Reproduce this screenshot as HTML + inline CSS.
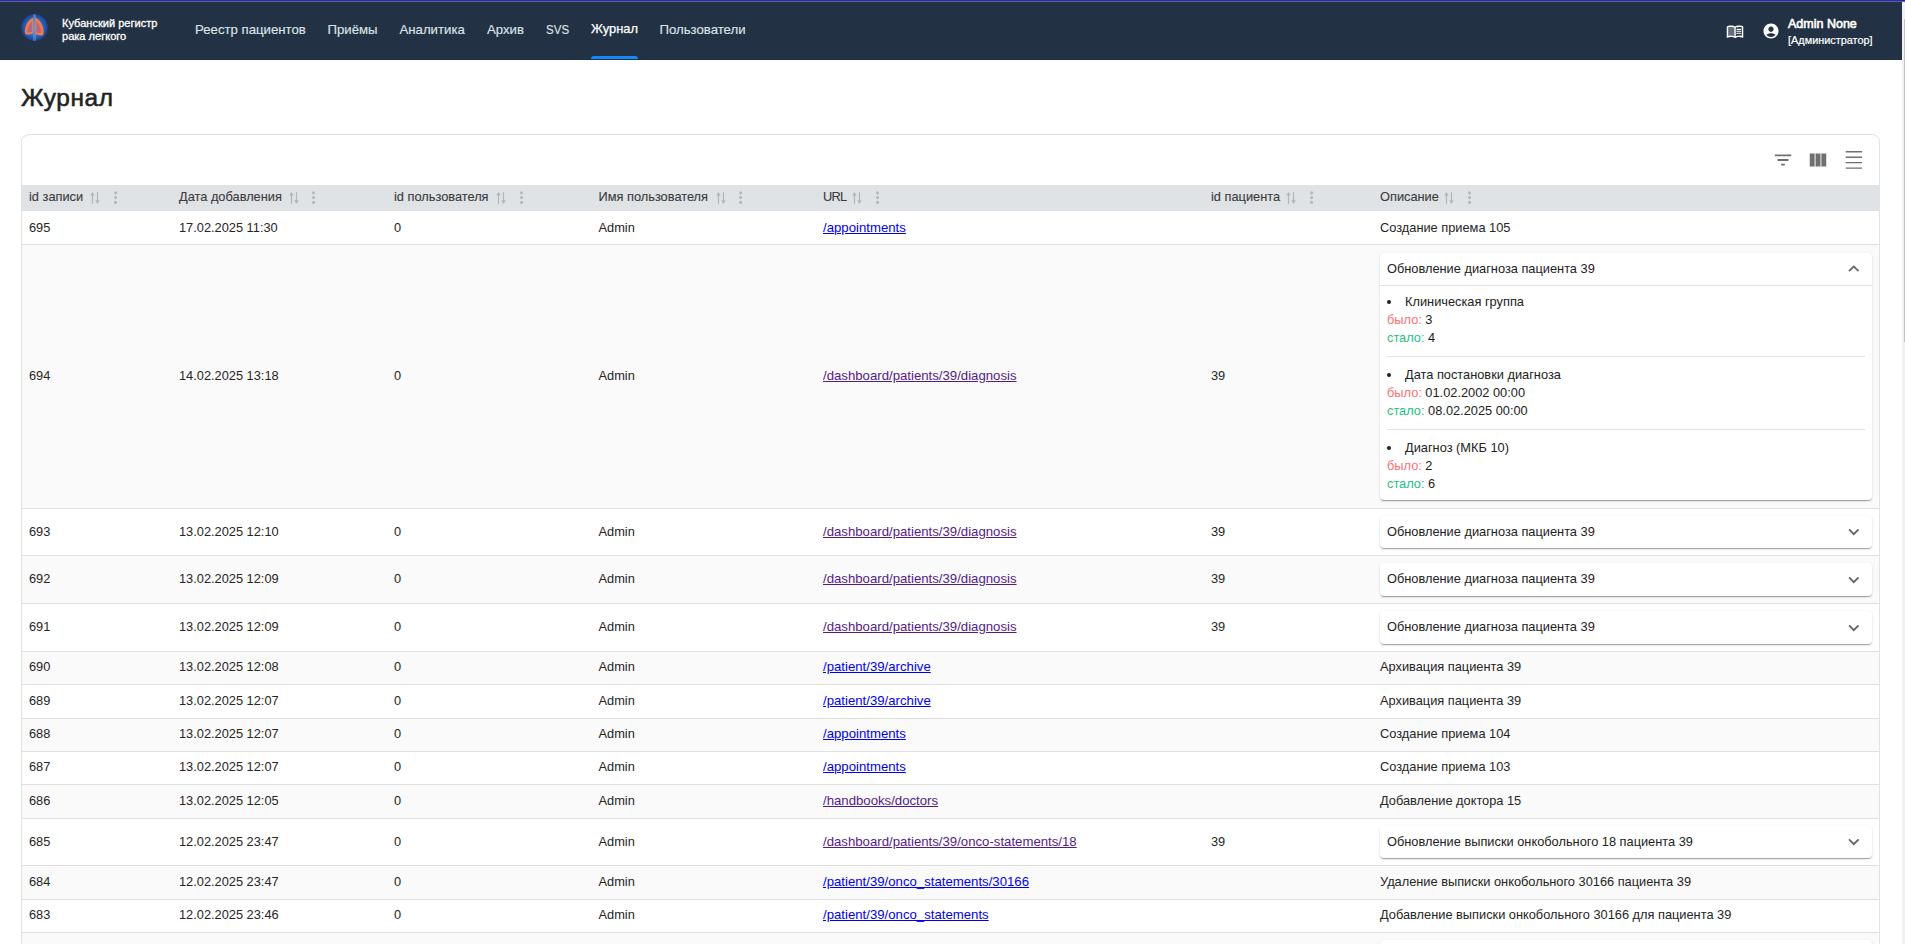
<!DOCTYPE html>
<html lang="ru"><head><meta charset="utf-8"><title>Журнал</title>
<style>
*{box-sizing:border-box}
html,body{margin:0;padding:0}
body{width:1905px;height:944px;overflow:hidden;position:relative;background:#fff;font-family:"Liberation Sans",sans-serif;color:#212121}
.abs{position:absolute}
#tl0{position:absolute;left:0;top:0;width:1905px;height:1px;background:#2b2c94}
#tl1{position:absolute;left:0;top:1px;width:1905px;height:1px;background:#5f5eae}
#hdr{position:absolute;left:0;top:2px;width:1902px;height:57.5px;background:#223244}
.nav{position:absolute;top:22.8px;font-size:13.2px;color:#dde2e7;white-space:nowrap;line-height:1;-webkit-text-stroke:0.15px #dde2e7}
.nav.act{color:#fff;-webkit-text-stroke:0.25px #fff}
#ind{position:absolute;left:591px;top:56px;width:47px;height:3px;background:#1688f3;border-radius:3px 3px 0 0}
#sb{position:absolute;left:1902px;top:2px;width:3px;height:942px;background:#f1f1f1}
#sbt{position:absolute;left:1904px;top:19px;width:1px;height:323px;background:#c1c1c1}
h1{position:absolute;left:21px;top:81.5px;margin:0;font-size:24.4px;letter-spacing:0.6px;font-weight:normal;line-height:32px;color:#222;-webkit-text-stroke:0.55px #222;white-space:nowrap}
#card{position:absolute;left:21px;top:134px;width:1859px;height:830px;border:1px solid #dfe3e6;border-radius:8px;overflow:hidden;background:#fff}
.brand{font-size:11.05px;line-height:13px;color:#fff;white-space:nowrap;-webkit-text-stroke:0.3px #fff}
.uname{font-size:12.5px;line-height:1;color:#fff;white-space:nowrap;-webkit-text-stroke:0.6px #fff}
.urole{font-size:10.9px;line-height:12px;color:#fff;white-space:nowrap;-webkit-text-stroke:0.2px #fff}
</style><style>
#card{position:absolute;left:21px;top:134px;width:1859px;height:830px;border:1px solid #dfe3e6;border-radius:8px;background:#fff}
.hrow{position:absolute;left:22px;top:185px;width:1857px;height:26px;background:#dfe3e6}
.ht{position:absolute;top:183.6px;height:26px;line-height:26px;font-size:12.8px;color:#3c3c3c;white-space:nowrap;-webkit-text-stroke:0.12px #3c3c3c}
.row{position:absolute;left:22px;width:1857px;border-bottom:1px solid #e0e0e0}
.row.g{background:#fafafa}
.c{position:absolute;font-size:12.8px;color:#252525;white-space:nowrap;line-height:16px}
a.l{color:#0000ee;text-decoration:underline;font-size:13.2px}
a.v{color:#551a8b;text-decoration:underline;font-size:13.2px}
.acc{position:absolute;left:1380px;width:492px;background:#fff;border-radius:4px;box-shadow:0px 2px 1px -1px rgba(0,0,0,0.2),0px 1px 1px 0px rgba(0,0,0,0.14),0px 1px 3px 0px rgba(0,0,0,0.12)}
.at{position:absolute;left:7px;font-size:12.8px;color:#222;white-space:nowrap;line-height:16px}
.chev{position:absolute;left:1843px}
.det{position:absolute;font-size:12.8px;line-height:16px;white-space:nowrap;color:#222}
.was{color:#f77373}
.now{color:#27bf80}
.bul{position:absolute;width:4.2px;height:4.2px;border-radius:50%;background:#222}
.dv{position:absolute;left:1387px;width:478px;height:1px;background:#dfe3e6}
</style>
</head>
<body>
<div id="tl0"></div><div id="tl1"></div>
<div id="hdr"></div>
<svg class="abs" style="left:20px;top:13px" width="29" height="29" viewBox="0 0 29 29">
<defs><radialGradient id="lg" cx="50%" cy="50%" r="50%"><stop offset="0" stop-color="#4f86d6"/><stop offset="0.6" stop-color="#3468bf"/><stop offset="0.9" stop-color="#1f4a98"/><stop offset="1" stop-color="#183c80"/></radialGradient></defs>
<circle cx="14.5" cy="14.5" r="13.5" fill="url(#lg)"/>
<rect x="13" y="1.2" width="3" height="26.6" fill="#80aef0" opacity="0.4"/>
<path d="M13.2 4.8 C10.5 5.2 6.6 9.5 5.2 15 C4.5 18 4.6 21 6 21.6 C8.5 22 11 21.3 13 20.6 Z" fill="#ee7c4e"/>
<path d="M15.2 4.8 C17.9 5.2 21.8 9.5 23.2 15 C23.9 18 23.8 21.8 22.4 22.4 C19.9 22.8 17.4 21.8 15.4 21 Z" fill="#ee7c4e"/>
<path d="M12 8 C9.8 10.5 7.5 14 7.3 19.5 C9 19.8 10.8 19.3 12.2 18.8 Z" fill="#a85f8c" opacity="0.75"/>
<path d="M16.4 8 C18.6 10.5 20.9 14 21.1 20 C19.4 20.3 17.6 19.8 16.2 19.3 Z" fill="#a85f8c" opacity="0.75"/>
</svg>
<div class="abs brand" style="left:62px;top:16.6px">Кубанский регистр<br>рака легкого</div>
<div class="nav" style="left:195px">Реестр пациентов</div>
<div class="nav" style="left:327.5px">Приёмы</div>
<div class="nav" style="left:399.5px">Аналитика</div>
<div class="nav" style="left:487px">Архив</div>
<div class="nav" style="left:545.5px;transform:scaleX(0.875);transform-origin:0 0">SVS</div>
<div class="nav act" style="left:591px;font-size:12.9px;top:23px">Журнал</div>
<div class="nav" style="left:659.5px">Пользователи</div>
<div id="ind"></div>
<svg class="abs" style="left:1726px;top:22px" width="18" height="18" viewBox="0 0 24 24" fill="#fff">
<path d="M21 5c-1.11-.35-2.33-.5-3.5-.5-1.95 0-4.050.4-5.5 1.5-1.45-1.1-3.55-1.5-5.5-1.5S2.45 4.9 1 6v14.65c0 .25.25.5.5.5.1 0 .15-.05.25-.05C3.1 20.45 5.05 20 6.5 20c1.95 0 4.05.4 5.5 1.5 1.35-.85 3.8-1.5 5.5-1.5 1.65 0 3.35.3 4.75 1.05.1.05.15.05.25.05.25 0 .5-.25.5-.5V6c-.6-.45-1.25-.75-2-1zM3 18.5V7c1.1-.35 2.3-.5 3.5-.5 1.34 0 3.13.41 4.5.99v11.5C9.63 18.41 7.84 18 6.5 18c-1.2 0-2.4.15-3.5.5zm18 0c-1.1-.35-2.3-.5-3.5-.5-1.340 0-3.13.41-4.5.99V7.49c1.37-.59 3.16-.99 4.5-.99 1.2 0 2.4.15 3.5.5v11.5z"/>
<path d="M11 7.49c-1.37-.58-3.16-.99-4.5-.99-1.2 0-2.4.15-3.5.5v11.5c1.1-.35 2.3-.5 3.5-.5 1.34 0 3.13.41 4.5.99V7.49z" opacity=".3"/>
<path d="M17.5 10.5c.88 0 1.73.09 2.5.26V9.24c-.79-.15-1.64-.24-2.5-.24-1.28 0-2.46.16-3.5.47v1.57c.99-.35 2.18-.54 3.5-.54zM17.5 13.16c.88 0 1.730.09 2.5.26V11.9c-.79-.15-1.64-.24-2.5-.24-1.28 0-2.46.16-3.5.47v1.57c.99-.34 2.18-.54 3.5-.54zM17.5 15.83c.88 0 1.73.09 2.5.26v-1.52c-.79-.15-1.64-.24-2.5-.24-1.28 0-2.46.16-3.5.47v1.57c.99-.35 2.18-.54 3.5-.54z"/>
</svg>
<svg class="abs" style="left:1762px;top:21.5px" width="18" height="18" viewBox="0 0 24 24" fill="#fff">
<path fill-rule="evenodd" d="M12 2C6.48 2 2 6.48 2 12s4.48 10 10 10 10-4.48 10-10S17.52 2 12 2zm0 4c1.93 0 3.5 1.57 3.5 3.5S13.930 13 12 13s-3.5-1.57-3.5-3.5S10.07 6 12 6zm0 14c-2.03 0-4.43-.82-6.14-2.88C7.55 15.8 9.68 15 12 15s4.45.8 6.14 2.12C16.43 19.18 14.03 20 12 20z"/>
</svg>
<div class="abs uname" style="left:1788px;top:18.2px">Admin None</div>
<div class="abs urole" style="left:1788px;top:34px">[Администратор]</div>

<div id="sb"></div><div id="sbt"></div>
<h1>Журнал</h1>
<div id="card"></div>
<svg class="abs" style="left:1772px;top:149px" width="22" height="22" viewBox="0 0 24 24" fill="#707070"><path d="M10 18h4v-2h-4zM3 6v2h18V6zm3 7h12v-2H6z"/></svg>
<svg class="abs" style="left:1807px;top:149px" width="22" height="22" viewBox="0 0 24 24" fill="#707070"><path d="M14.67 5v14H9.33V5zm1 14H21V5h-5.33zm-7.34 0V5H3v14z"/></svg>
<svg class="abs" style="left:1843.1px;top:148.8px" width="21.84" height="21.84" viewBox="0 0 24 24" fill="#707070"><path d="M3 2.3h18v1.5H3zm0 18h18v1.5H3zm0-6h18v1.5H3zm0-6h18v1.5H3z"/></svg>
<div class="hrow"></div>
<div class="ht" style="left:29px">id записи</div>
<svg class="abs" style="left:89px;top:191px" width="12" height="14" viewBox="0 0 12 14" fill="#b1b6ba"><rect x="2.9" y="2.2" width="1.2" height="10.7"/><path d="M3.5 0.9 L5.8 4.6 L1.2000000000000002 4.6 Z"/><rect x="7.9" y="1.2" width="1.2" height="10.5"/><path d="M8.5 12.9 L10.8 9.2 L6.2 9.2 Z"/></svg>
<svg class="abs" style="left:106.06px;top:188.25px" width="19.2" height="19.2" viewBox="0 0 24 24" fill="#b4b9bd"><path d="M12 8c1.1 0 2-.9 2-2s-.9-2-2-2-2 .9-2 2 .9 2 2 2m0 2c-1.1 0-2 .9-2 2s.9 2 2 2 2-.9 2-2-.9-2-2-2m0 6c-1.1 0-2 .9-2 2s.9 2 2 2 2-.9 2-2-.9-2-2-2"/></svg>
<div class="ht" style="left:179px">Дата добавления</div>
<svg class="abs" style="left:288px;top:191px" width="12" height="14" viewBox="0 0 12 14" fill="#b1b6ba"><rect x="2.9" y="2.2" width="1.2" height="10.7"/><path d="M3.5 0.9 L5.8 4.6 L1.2000000000000002 4.6 Z"/><rect x="7.9" y="1.2" width="1.2" height="10.5"/><path d="M8.5 12.9 L10.8 9.2 L6.2 9.2 Z"/></svg>
<svg class="abs" style="left:304.30px;top:188.25px" width="19.2" height="19.2" viewBox="0 0 24 24" fill="#b4b9bd"><path d="M12 8c1.1 0 2-.9 2-2s-.9-2-2-2-2 .9-2 2 .9 2 2 2m0 2c-1.1 0-2 .9-2 2s.9 2 2 2 2-.9 2-2-.9-2-2-2m0 6c-1.1 0-2 .9-2 2s.9 2 2 2 2-.9 2-2-.9-2-2-2"/></svg>
<div class="ht" style="left:394px">id пользователя</div>
<svg class="abs" style="left:495px;top:191px" width="12" height="14" viewBox="0 0 12 14" fill="#b1b6ba"><rect x="2.9" y="2.2" width="1.2" height="10.7"/><path d="M3.5 0.9 L5.8 4.6 L1.2000000000000002 4.6 Z"/><rect x="7.9" y="1.2" width="1.2" height="10.5"/><path d="M8.5 12.9 L10.8 9.2 L6.2 9.2 Z"/></svg>
<svg class="abs" style="left:512.20px;top:188.25px" width="19.2" height="19.2" viewBox="0 0 24 24" fill="#b4b9bd"><path d="M12 8c1.1 0 2-.9 2-2s-.9-2-2-2-2 .9-2 2 .9 2 2 2m0 2c-1.1 0-2 .9-2 2s.9 2 2 2 2-.9 2-2-.9-2-2-2m0 6c-1.1 0-2 .9-2 2s.9 2 2 2 2-.9 2-2-.9-2-2-2"/></svg>
<div class="ht" style="left:598.5px">Имя пользователя</div>
<svg class="abs" style="left:715px;top:191px" width="12" height="14" viewBox="0 0 12 14" fill="#b1b6ba"><rect x="2.9" y="2.2" width="1.2" height="10.7"/><path d="M3.5 0.9 L5.8 4.6 L1.2000000000000002 4.6 Z"/><rect x="7.9" y="1.2" width="1.2" height="10.5"/><path d="M8.5 12.9 L10.8 9.2 L6.2 9.2 Z"/></svg>
<svg class="abs" style="left:731.20px;top:188.25px" width="19.2" height="19.2" viewBox="0 0 24 24" fill="#b4b9bd"><path d="M12 8c1.1 0 2-.9 2-2s-.9-2-2-2-2 .9-2 2 .9 2 2 2m0 2c-1.1 0-2 .9-2 2s.9 2 2 2 2-.9 2-2-.9-2-2-2m0 6c-1.1 0-2 .9-2 2s.9 2 2 2 2-.9 2-2-.9-2-2-2"/></svg>
<div class="ht" style="left:823px;letter-spacing:-0.75px">URL</div>
<svg class="abs" style="left:851px;top:191px" width="12" height="14" viewBox="0 0 12 14" fill="#b1b6ba"><rect x="2.9" y="2.2" width="1.2" height="10.7"/><path d="M3.5 0.9 L5.8 4.6 L1.2000000000000002 4.6 Z"/><rect x="7.9" y="1.2" width="1.2" height="10.5"/><path d="M8.5 12.9 L10.8 9.2 L6.2 9.2 Z"/></svg>
<svg class="abs" style="left:868.10px;top:188.25px" width="19.2" height="19.2" viewBox="0 0 24 24" fill="#b4b9bd"><path d="M12 8c1.1 0 2-.9 2-2s-.9-2-2-2-2 .9-2 2 .9 2 2 2m0 2c-1.1 0-2 .9-2 2s.9 2 2 2 2-.9 2-2-.9-2-2-2m0 6c-1.1 0-2 .9-2 2s.9 2 2 2 2-.9 2-2-.9-2-2-2"/></svg>
<div class="ht" style="left:1211px">id пациента</div>
<svg class="abs" style="left:1285px;top:191px" width="12" height="14" viewBox="0 0 12 14" fill="#b1b6ba"><rect x="2.9" y="2.2" width="1.2" height="10.7"/><path d="M3.5 0.9 L5.8 4.6 L1.2000000000000002 4.6 Z"/><rect x="7.9" y="1.2" width="1.2" height="10.5"/><path d="M8.5 12.9 L10.8 9.2 L6.2 9.2 Z"/></svg>
<svg class="abs" style="left:1302.10px;top:188.25px" width="19.2" height="19.2" viewBox="0 0 24 24" fill="#b4b9bd"><path d="M12 8c1.1 0 2-.9 2-2s-.9-2-2-2-2 .9-2 2 .9 2 2 2m0 2c-1.1 0-2 .9-2 2s.9 2 2 2 2-.9 2-2-.9-2-2-2m0 6c-1.1 0-2 .9-2 2s.9 2 2 2 2-.9 2-2-.9-2-2-2"/></svg>
<div class="ht" style="left:1380px">Описание</div>
<svg class="abs" style="left:1443px;top:191px" width="12" height="14" viewBox="0 0 12 14" fill="#b1b6ba"><rect x="2.9" y="2.2" width="1.2" height="10.7"/><path d="M3.5 0.9 L5.8 4.6 L1.2000000000000002 4.6 Z"/><rect x="7.9" y="1.2" width="1.2" height="10.5"/><path d="M8.5 12.9 L10.8 9.2 L6.2 9.2 Z"/></svg>
<svg class="abs" style="left:1460.10px;top:188.25px" width="19.2" height="19.2" viewBox="0 0 24 24" fill="#b4b9bd"><path d="M12 8c1.1 0 2-.9 2-2s-.9-2-2-2-2 .9-2 2 .9 2 2 2m0 2c-1.1 0-2 .9-2 2s.9 2 2 2 2-.9 2-2-.9-2-2-2m0 6c-1.1 0-2 .9-2 2s.9 2 2 2 2-.9 2-2-.9-2-2-2"/></svg>
<div class="row" style="top:211px;height:34px"></div>
<div class="c" style="left:29px;top:219.50px">695</div>
<div class="c" style="left:179px;top:219.50px">17.02.2025 11:30</div>
<div class="c" style="left:394px;top:219.50px">0</div>
<div class="c" style="left:598.5px;top:219.50px">Admin</div>
<div class="c" style="left:823px;top:219.50px"><a class="l">/appointments</a></div>
<div class="c" style="left:1380px;top:219.50px">Создание приема 105</div>
<div class="row g" style="top:245px;height:264px"></div>
<div class="c" style="left:29px;top:367.65px">694</div>
<div class="c" style="left:179px;top:367.65px">14.02.2025 13:18</div>
<div class="c" style="left:394px;top:367.65px">0</div>
<div class="c" style="left:598.5px;top:367.65px">Admin</div>
<div class="c" style="left:823px;top:367.65px"><a class="v">/dashboard/patients/39/diagnosis</a></div>
<div class="c" style="left:1211px;top:367.65px">39</div>
<div class="acc" style="top:253px;height:247px"><div class="at" style="top:8.00px">Обновление диагноза пациента 39</div><div style="position:absolute;left:0;top:32px;width:492px;height:1px;background:#dfe3e6"></div></div>
<svg class="chev abs" style="top:257.70px" width="21.6" height="21.6" viewBox="0 0 24 24" fill="#666"><path d="m12 8-6 6 1.41 1.41L12 10.83l4.59 4.58L18 14z"/></svg>
<div class="bul" style="left:1387px;top:300.30px"></div>
<div class="det" style="left:1405px;top:294.00px">Клиническая группа</div>
<div class="det" style="left:1387px;top:312.00px"><span class="was">было:</span> 3</div>
<div class="det" style="left:1387px;top:330.00px"><span class="now">стало:</span> 4</div>
<div class="dv" style="top:356px"></div>
<div class="bul" style="left:1387px;top:373.30px"></div>
<div class="det" style="left:1405px;top:367.00px">Дата постановки диагноза</div>
<div class="det" style="left:1387px;top:385.00px"><span class="was">было:</span> 01.02.2002 00:00</div>
<div class="det" style="left:1387px;top:403.00px"><span class="now">стало:</span> 08.02.2025 00:00</div>
<div class="dv" style="top:429px"></div>
<div class="bul" style="left:1387px;top:446.20px"></div>
<div class="det" style="left:1405px;top:439.90px">Диагноз (МКБ 10)</div>
<div class="det" style="left:1387px;top:457.90px"><span class="was">было:</span> 2</div>
<div class="det" style="left:1387px;top:475.90px"><span class="now">стало:</span> 6</div>
<div class="row" style="top:509px;height:47px"></div>
<div class="c" style="left:29px;top:523.60px">693</div>
<div class="c" style="left:179px;top:523.60px">13.02.2025 12:10</div>
<div class="c" style="left:394px;top:523.60px">0</div>
<div class="c" style="left:598.5px;top:523.60px">Admin</div>
<div class="c" style="left:823px;top:523.60px"><a class="v">/dashboard/patients/39/diagnosis</a></div>
<div class="c" style="left:1211px;top:523.60px">39</div>
<div class="acc" style="top:516px;height:32px"><div class="at" style="top:7.70px">Обновление диагноза пациента 39</div></div>
<svg class="chev abs" style="top:521.20px" width="21.6" height="21.6" viewBox="0 0 24 24" fill="#666"><path d="M16.59 8.59 12 13.17 7.41 8.59 6 10l6 6 6-6z"/></svg>
<div class="row g" style="top:556px;height:48px"></div>
<div class="c" style="left:29px;top:571.10px">692</div>
<div class="c" style="left:179px;top:571.10px">13.02.2025 12:09</div>
<div class="c" style="left:394px;top:571.10px">0</div>
<div class="c" style="left:598.5px;top:571.10px">Admin</div>
<div class="c" style="left:823px;top:571.10px"><a class="v">/dashboard/patients/39/diagnosis</a></div>
<div class="c" style="left:1211px;top:571.10px">39</div>
<div class="acc" style="top:563px;height:33px"><div class="at" style="top:8.20px">Обновление диагноза пациента 39</div></div>
<svg class="chev abs" style="top:568.70px" width="21.6" height="21.6" viewBox="0 0 24 24" fill="#666"><path d="M16.59 8.59 12 13.17 7.41 8.59 6 10l6 6 6-6z"/></svg>
<div class="row" style="top:604px;height:48px"></div>
<div class="c" style="left:29px;top:619.10px">691</div>
<div class="c" style="left:179px;top:619.10px">13.02.2025 12:09</div>
<div class="c" style="left:394px;top:619.10px">0</div>
<div class="c" style="left:598.5px;top:619.10px">Admin</div>
<div class="c" style="left:823px;top:619.10px"><a class="v">/dashboard/patients/39/diagnosis</a></div>
<div class="c" style="left:1211px;top:619.10px">39</div>
<div class="acc" style="top:611px;height:33px"><div class="at" style="top:8.20px">Обновление диагноза пациента 39</div></div>
<svg class="chev abs" style="top:616.70px" width="21.6" height="21.6" viewBox="0 0 24 24" fill="#666"><path d="M16.59 8.59 12 13.17 7.41 8.59 6 10l6 6 6-6z"/></svg>
<div class="row g" style="top:652px;height:33px"></div>
<div class="c" style="left:29px;top:659.15px">690</div>
<div class="c" style="left:179px;top:659.15px">13.02.2025 12:08</div>
<div class="c" style="left:394px;top:659.15px">0</div>
<div class="c" style="left:598.5px;top:659.15px">Admin</div>
<div class="c" style="left:823px;top:659.15px"><a class="l">/patient/39/archive</a></div>
<div class="c" style="left:1380px;top:659.15px">Архивация пациента 39</div>
<div class="row" style="top:685px;height:34px"></div>
<div class="c" style="left:29px;top:692.65px">689</div>
<div class="c" style="left:179px;top:692.65px">13.02.2025 12:07</div>
<div class="c" style="left:394px;top:692.65px">0</div>
<div class="c" style="left:598.5px;top:692.65px">Admin</div>
<div class="c" style="left:823px;top:692.65px"><a class="l">/patient/39/archive</a></div>
<div class="c" style="left:1380px;top:692.65px">Архивация пациента 39</div>
<div class="row g" style="top:719px;height:33px"></div>
<div class="c" style="left:29px;top:726.15px">688</div>
<div class="c" style="left:179px;top:726.15px">13.02.2025 12:07</div>
<div class="c" style="left:394px;top:726.15px">0</div>
<div class="c" style="left:598.5px;top:726.15px">Admin</div>
<div class="c" style="left:823px;top:726.15px"><a class="l">/appointments</a></div>
<div class="c" style="left:1380px;top:726.15px">Создание приема 104</div>
<div class="row" style="top:752px;height:33px"></div>
<div class="c" style="left:29px;top:759.15px">687</div>
<div class="c" style="left:179px;top:759.15px">13.02.2025 12:07</div>
<div class="c" style="left:394px;top:759.15px">0</div>
<div class="c" style="left:598.5px;top:759.15px">Admin</div>
<div class="c" style="left:823px;top:759.15px"><a class="l">/appointments</a></div>
<div class="c" style="left:1380px;top:759.15px">Создание приема 103</div>
<div class="row g" style="top:785px;height:34px"></div>
<div class="c" style="left:29px;top:792.65px">686</div>
<div class="c" style="left:179px;top:792.65px">13.02.2025 12:05</div>
<div class="c" style="left:394px;top:792.65px">0</div>
<div class="c" style="left:598.5px;top:792.65px">Admin</div>
<div class="c" style="left:823px;top:792.65px"><a class="v">/handbooks/doctors</a></div>
<div class="c" style="left:1380px;top:792.65px">Добавление доктора 15</div>
<div class="row" style="top:819px;height:47px"></div>
<div class="c" style="left:29px;top:833.60px">685</div>
<div class="c" style="left:179px;top:833.60px">12.02.2025 23:47</div>
<div class="c" style="left:394px;top:833.60px">0</div>
<div class="c" style="left:598.5px;top:833.60px">Admin</div>
<div class="c" style="left:823px;top:833.60px"><a class="v">/dashboard/patients/39/onco-statements/18</a></div>
<div class="c" style="left:1211px;top:833.60px">39</div>
<div class="acc" style="top:826px;height:32px"><div class="at" style="top:7.70px">Обновление выписки онкобольного 18 пациента 39</div></div>
<svg class="chev abs" style="top:831.20px" width="21.6" height="21.6" viewBox="0 0 24 24" fill="#666"><path d="M16.59 8.59 12 13.17 7.41 8.59 6 10l6 6 6-6z"/></svg>
<div class="row g" style="top:866px;height:34px"></div>
<div class="c" style="left:29px;top:873.65px">684</div>
<div class="c" style="left:179px;top:873.65px">12.02.2025 23:47</div>
<div class="c" style="left:394px;top:873.65px">0</div>
<div class="c" style="left:598.5px;top:873.65px">Admin</div>
<div class="c" style="left:823px;top:873.65px"><a class="l">/patient/39/onco_statements/30166</a></div>
<div class="c" style="left:1380px;top:873.65px">Удаление выписки онкобольного 30166 пациента 39</div>
<div class="row" style="top:900px;height:33px"></div>
<div class="c" style="left:29px;top:907.15px">683</div>
<div class="c" style="left:179px;top:907.15px">12.02.2025 23:46</div>
<div class="c" style="left:394px;top:907.15px">0</div>
<div class="c" style="left:598.5px;top:907.15px">Admin</div>
<div class="c" style="left:823px;top:907.15px"><a class="l">/patient/39/onco_statements</a></div>
<div class="c" style="left:1380px;top:907.15px">Добавление выписки онкобольного 30166 для пациента 39</div>
<div class="row g" style="top:933px;height:48px"></div>
<div class="c" style="left:29px;top:948.10px">682</div>
<div class="c" style="left:179px;top:948.10px">12.02.2025 23:40</div>
<div class="c" style="left:394px;top:948.10px">0</div>
<div class="c" style="left:598.5px;top:948.10px">Admin</div>
<div class="c" style="left:823px;top:948.10px"><a class="v">/dashboard/patients/39/onco-statements/18</a></div>
<div class="c" style="left:1211px;top:948.10px">39</div>
<div class="acc" style="top:940px;height:33px"><div class="at" style="top:8.20px">Обновление выписки онкобольного 18 пациента 39</div></div>
<svg class="chev abs" style="top:945.70px" width="21.6" height="21.6" viewBox="0 0 24 24" fill="#666"><path d="M16.59 8.59 12 13.17 7.41 8.59 6 10l6 6 6-6z"/></svg>
</body></html>
